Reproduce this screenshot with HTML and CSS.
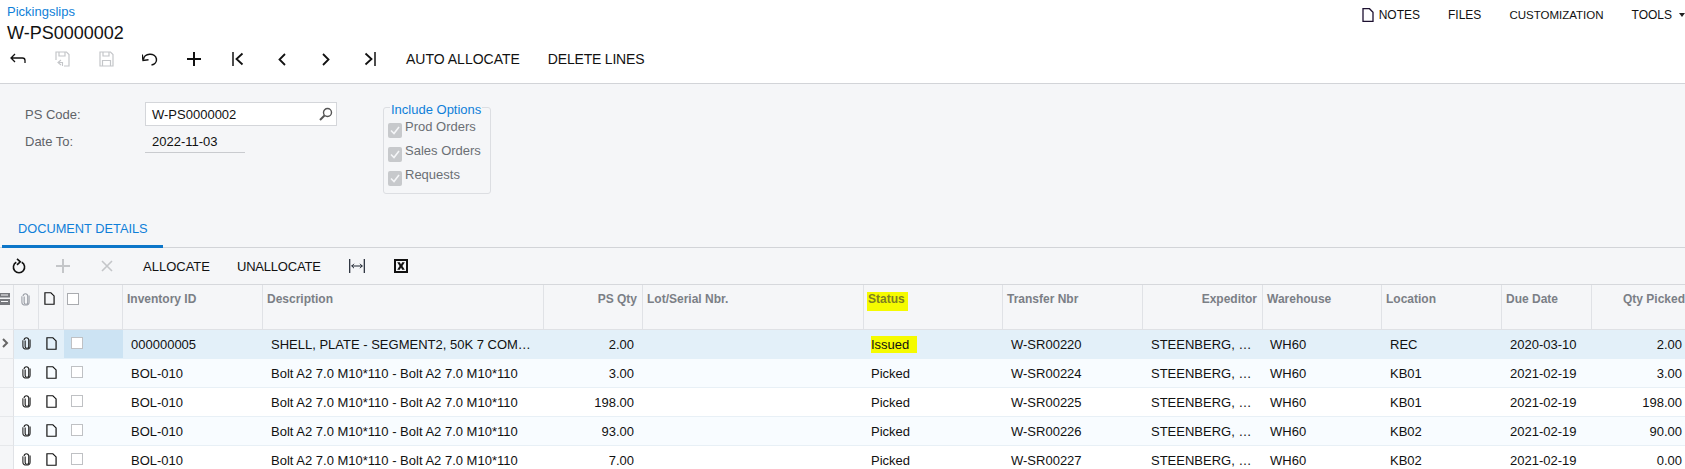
FILE: index.html
```html
<!DOCTYPE html>
<html lang="en">
<head>
<meta charset="utf-8">
<title>Pickingslips</title>
<link rel="stylesheet" href="styles.css">
</head>
<body>
<svg class="defs" width="0" height="0" aria-hidden="true">
  <symbol id="i-clip" viewBox="0 0 10 14"><path d="M3 3.500V10a2 2 0 0 0 4 0V3a2.600 2.600 0 0 0-5.200 0" transform="translate(0.500 0.800)" fill="none" stroke="currentColor" stroke-width="1.300"/><path d="M1 4v6.500a4 3.200 0 0 0 8 0V3" fill="none" stroke="currentColor" stroke-width="1.200"/></symbol>
  <symbol id="i-note" viewBox="0 0 12 14"><path d="M1 .7h6.500L11 4.200v9.100H1z" fill="none" stroke="currentColor" stroke-width="1.300"/></symbol>
  <symbol id="i-floppy" viewBox="0 0 15 16"><path d="M1 1h10.500L14 3.500V15H1zM4 1v4h6V1M3.500 15V9.500h8V15" fill="none" stroke="currentColor" stroke-width="1.200"/></symbol>
</svg>

<header class="top">
  <div class="title-row">
    <div class="title-block">
      <a class="crumb">Pickingslips</a>
      <h1 class="doc-title">W-PS0000002</h1>
    </div>
    <nav class="top-menu">
      <span class="menu-item notes">
        <svg class="ic-note-top"><use href="#i-note"/></svg>NOTES
      </span>
      <span class="menu-item">FILES</span>
      <span class="menu-item narrow">CUSTOMIZATION</span>
      <span class="menu-item tools">TOOLS<i class="caret"></i></span>
    </nav>
  </div>
  <div class="toolbar">
    <button class="tool"><svg width="16" height="12" viewBox="0 0 16 12"><path d="M5 1 1 5l4 4M1 5h11.500Q15 5 15 7.500V10" fill="none" stroke="currentColor" stroke-width="1.300"/></svg></button>
    <button class="tool off"><svg width="15" height="16" viewBox="0 0 15 16"><path d="M1 9V1h10.500L14 3.500V15H9M4 1v4h6V1" fill="none" stroke="currentColor" stroke-width="1.200"/><path d="M6 9 3 11.500 6 14M3 11.500h4.500V15" fill="none" stroke="currentColor" stroke-width="1.100"/></svg></button>
    <button class="tool off"><svg width="15" height="16"><use href="#i-floppy"/></svg></button>
    <button class="tool"><svg width="16" height="13" viewBox="0 0 16 13"><path d="M1.500 6.500A6.500 5.500 0 1 1 9.500 12" fill="none" stroke="currentColor" stroke-width="1.500"/><path d="M1 1.500v6h5.500" fill="none" stroke="currentColor" stroke-width="1.500" transform="rotate(-8 1 7)"/></svg></button>
    <button class="tool"><svg width="14" height="14" viewBox="0 0 14 14"><path d="M7 0v14M0 7h14" stroke="currentColor" stroke-width="2"/></svg></button>
    <button class="tool"><svg width="12" height="14" viewBox="0 0 12 14"><path d="M1 0v14" stroke="currentColor" stroke-width="1.500"/><path d="M10.500 1.500 4.500 7l6 5.500" fill="none" stroke="currentColor" stroke-width="1.800"/></svg></button>
    <button class="tool"><svg width="8" height="13" viewBox="0 0 8 13"><path d="M7 1 1.500 6.500 7 12" fill="none" stroke="currentColor" stroke-width="1.800"/></svg></button>
    <button class="tool"><svg width="8" height="13" viewBox="0 0 8 13"><path d="m1 1 5.500 5.500L1 12" fill="none" stroke="currentColor" stroke-width="1.800"/></svg></button>
    <button class="tool"><svg width="12" height="14" viewBox="0 0 12 14"><path d="M11 0v14" stroke="currentColor" stroke-width="1.500"/><path d="m1.500 1.500 6 5.500-6 5.500" fill="none" stroke="currentColor" stroke-width="1.800"/></svg></button>
    <span class="text-tool first">AUTO ALLOCATE</span>
    <span class="text-tool">DELETE LINES</span>
  </div>
</header>

<main class="body">
  <section class="form">
    <div class="fields">
      <div class="field-row">
        <label class="field-label">PS Code:</label>
        <div class="selector">W-PS0000002
          <svg class="search" width="14" height="14" viewBox="0 0 14 14"><circle cx="8.500" cy="5.500" r="4" fill="none" stroke="#555" stroke-width="1.400"/><path d="M5.500 8.500 1 13" stroke="#555" stroke-width="2"/></svg>
        </div>
      </div>
      <div class="field-row">
        <label class="field-label">Date To:</label>
        <div class="date">2022-11-03</div>
      </div>
    </div>
    <fieldset class="options">
      <legend class="legend">Include Options</legend>
      <div class="opt"><span class="chk"><svg width="10" height="9" viewBox="0 0 10 9"><path d="m1 4.500 3 3 5-6.500" fill="none" stroke="#f5f6f8" stroke-width="1.600"/></svg></span><span class="opt-text">Prod Orders</span></div>
      <div class="opt"><span class="chk"><svg width="10" height="9" viewBox="0 0 10 9"><path d="m1 4.500 3 3 5-6.500" fill="none" stroke="#f5f6f8" stroke-width="1.600"/></svg></span><span class="opt-text">Sales Orders</span></div>
      <div class="opt"><span class="chk"><svg width="10" height="9" viewBox="0 0 10 9"><path d="m1 4.500 3 3 5-6.500" fill="none" stroke="#f5f6f8" stroke-width="1.600"/></svg></span><span class="opt-text">Requests</span></div>
    </fieldset>
  </section>

  <div class="tabs"><span class="tab">DOCUMENT DETAILS</span></div>

  <div class="grid-toolbar">
    <button class="gtool"><svg width="14" height="16" viewBox="0 0 14 16"><path d="M4.300 4.300a5.600 5.600 0 1 0 5.400 0" fill="none" stroke="currentColor" stroke-width="1.600"/><path d="M5 .8 8.300 3.800 5 6.800" fill="none" stroke="currentColor" stroke-width="1.600"/></svg></button>
    <button class="gtool off"><svg width="14" height="14" viewBox="0 0 14 14"><path d="M7 0v14M0 7h14" stroke="currentColor" stroke-width="2"/></svg></button>
    <button class="gtool off"><svg width="12" height="12" viewBox="0 0 12 12"><path d="m1 1 10 10M11 1 1 11" stroke="currentColor" stroke-width="1.600"/></svg></button>
    <span class="gtext first">ALLOCATE</span>
    <span class="gtext second">UNALLOCATE</span>
    <svg class="fit" width="16" height="14" viewBox="0 0 16 14"><path d="M.7 0v14M15.300 0v14" stroke="currentColor" stroke-width="1.200"/><path d="M2.500 7h11M5 4.800 2.800 7 5 9.200M11 4.800 13.200 7 11 9.200" fill="none" stroke="currentColor"/></svg>
    <svg class="xls" width="14" height="14" viewBox="0 0 14 14"><rect x="1" y="1" width="12" height="12" fill="none" stroke="currentColor" stroke-width="2"/><path d="M3.200 3.300h2.600L7 5.400l1.200-2.100h2.600L8.400 7l2.400 3.700H8.200L7 8.600l-1.200 2.100H3.200L5.600 7z" fill="currentColor"/></svg>
  </div>

  <table class="grid">
    <colgroup>
      <col class="c14"><col class="c25"><col class="c25"><col class="c59"><col class="c140"><col class="c281"><col class="c99"><col class="c221"><col class="c139"><col class="c140"><col class="c120"><col class="c119"><col class="c120"><col class="c90"><col class="c99">
    </colgroup>
    <thead>
      <tr>
        <th class="gut"><svg width="11" height="12" viewBox="0 0 11 12"><path d="M0 0h11v4.500H0zM0 6h11v6H0z" fill="#77797e"/><path d="M2 2h7M2 8.500h7" stroke="#f5f6f8" stroke-width="1.200"/></svg></th>
        <th class="ic"><svg class="clip head" width="9" height="14"><use href="#i-clip"/></svg></th>
        <th class="ic"><svg class="nt head-nt" width="11" height="13"><use href="#i-note"/></svg></th>
        <th class="ic chkcol"><span class="box head-box"></span></th>
        <th>Inventory ID</th>
        <th>Description</th>
        <th class="r">PS Qty</th>
        <th>Lot/Serial Nbr.</th>
        <th><span class="mark-h">Status</span></th>
        <th>Transfer Nbr</th>
        <th class="r">Expeditor</th>
        <th>Warehouse</th>
        <th>Location</th>
        <th>Due Date</th>
        <th class="r">Qty Picked</th>
      </tr>
    </thead>
    <tbody>
      <tr class="active">
        <td class="gut"><svg width="7" height="10" viewBox="0 0 7 10"><path d="m1 1 4 4-4 4" fill="none" stroke="#666" stroke-width="2"/></svg></td>
        <td class="ic"><svg class="clip" width="9" height="14"><use href="#i-clip"/></svg></td>
        <td class="ic"><svg class="nt" width="11" height="13"><use href="#i-note"/></svg></td>
        <td class="ic chkcol sel"><span class="box"></span></td>
        <td>000000005</td><td><div class="ell">SHELL, PLATE - SEGMENT2, 50K 7 COMPONENTS</div></td><td class="r">2.00</td><td></td><td><span class="mark">Issued</span></td><td>W-SR00220</td><td><div class="ell">STEENBERG, JOHANNES</div></td><td>WH60</td><td>REC</td><td>2020-03-10</td><td class="r">2.00</td>
      </tr>
      <tr class="alt">
        <td class="gut"></td><td class="ic"><svg class="clip" width="9" height="14"><use href="#i-clip"/></svg></td><td class="ic"><svg class="nt" width="11" height="13"><use href="#i-note"/></svg></td><td class="ic chkcol"><span class="box"></span></td>
        <td>BOL-010</td><td><div class="ell">Bolt A2 7.0 M10*110 - Bolt A2 7.0 M10*110</div></td><td class="r">3.00</td><td></td><td>Picked</td><td>W-SR00224</td><td><div class="ell">STEENBERG, JOHANNES</div></td><td>WH60</td><td>KB01</td><td>2021-02-19</td><td class="r">3.00</td>
      </tr>
      <tr>
        <td class="gut"></td><td class="ic"><svg class="clip" width="9" height="14"><use href="#i-clip"/></svg></td><td class="ic"><svg class="nt" width="11" height="13"><use href="#i-note"/></svg></td><td class="ic chkcol"><span class="box"></span></td>
        <td>BOL-010</td><td><div class="ell">Bolt A2 7.0 M10*110 - Bolt A2 7.0 M10*110</div></td><td class="r">198.00</td><td></td><td>Picked</td><td>W-SR00225</td><td><div class="ell">STEENBERG, JOHANNES</div></td><td>WH60</td><td>KB01</td><td>2021-02-19</td><td class="r">198.00</td>
      </tr>
      <tr class="alt">
        <td class="gut"></td><td class="ic"><svg class="clip" width="9" height="14"><use href="#i-clip"/></svg></td><td class="ic"><svg class="nt" width="11" height="13"><use href="#i-note"/></svg></td><td class="ic chkcol"><span class="box"></span></td>
        <td>BOL-010</td><td><div class="ell">Bolt A2 7.0 M10*110 - Bolt A2 7.0 M10*110</div></td><td class="r">93.00</td><td></td><td>Picked</td><td>W-SR00226</td><td><div class="ell">STEENBERG, JOHANNES</div></td><td>WH60</td><td>KB02</td><td>2021-02-19</td><td class="r">90.00</td>
      </tr>
      <tr>
        <td class="gut"></td><td class="ic"><svg class="clip" width="9" height="14"><use href="#i-clip"/></svg></td><td class="ic"><svg class="nt" width="11" height="13"><use href="#i-note"/></svg></td><td class="ic chkcol"><span class="box"></span></td>
        <td>BOL-010</td><td><div class="ell">Bolt A2 7.0 M10*110 - Bolt A2 7.0 M10*110</div></td><td class="r">7.00</td><td></td><td>Picked</td><td>W-SR00227</td><td><div class="ell">STEENBERG, JOHANNES</div></td><td>WH60</td><td>KB02</td><td>2021-02-19</td><td class="r">0.00</td>
      </tr>
    </tbody>
  </table>
</main>
</body>
</html>
```

FILE: styles.css
```css
* { box-sizing: border-box; }
html, body { margin: 0; height: 469px; overflow: hidden; }
body { width: 1685px; background: #fff; color: #111; font: 13px "Liberation Sans", Arial, sans-serif; }
.defs { display: block; height: 0; }

.top { height: 84px; background: #fff; border-bottom: 1px solid #d2d4d8; }
.title-row { display: flex; justify-content: space-between; height: 44px; padding-left: 7px; }
.crumb { display: block; color: #0f7fd8; font-size: 13px; line-height: 15px; padding-top: 4px; height: 19px; }
.doc-title { margin: 3px 0 0; font-size: 18px; font-weight: 400; line-height: 22px; height: 22px; }
.top-menu { display: flex; align-items: center; height: 30px; font-size: 12px; gap: 28px; }
.menu-item { display: flex; align-items: center; white-space: nowrap; }
.menu-item.narrow { font-size: 11.500px; }
.ic-note-top { width: 12px; height: 14px; margin-right: 5px; color: #1d1030; }
.caret { display: inline-block; margin-left: 7px; border: 3px solid transparent; border-top: 4px solid #222; border-bottom: 0; }

.toolbar { display: flex; align-items: center; gap: 8px; height: 30px; }
.tool { display: flex; align-items: center; justify-content: center; width: 36px; height: 30px; padding: 0; border: 0; background: none; color: #111; }
.tool.off { color: #c4c6c9; }
.text-tool { font-size: 14px; margin-left: 20px; white-space: nowrap; }
.text-tool.first { margin-left: 10px; }
.text-tool + .text-tool { letter-spacing: -.2px; }

.body { background: #f5f6f8; height: 385px; }
.form { display: flex; height: 116px; padding: 18px 0 0 25px; }
.fields { width: 358px; }
.field-row { display: flex; align-items: center; height: 24px; margin-bottom: 3px; }
.field-label { width: 120px; color: #5f6368; font-size: 13px; }
.selector { position: relative; width: 192px; height: 24px; padding-left: 6px; background: #fff; border: 1px solid #d4d6da; line-height: 23px; font-size: 13px; }
.search { position: absolute; right: 3px; top: 4px; }
.date { width: 100px; height: 24px; padding-left: 7px; border-bottom: 1px solid #c9cbcf; line-height: 25px; font-size: 13px; }

.options { width: 108px; height: 97px; margin: -5px 0 0; padding: 0 0 0 4px; border: 1px solid #dcdee2; border-radius: 3px; }
.legend { height: 20px; padding: 6px 1px 0; margin-left: 2px; color: #0f7fd8; font-size: 13px; line-height: 14px; }
.opt { display: flex; height: 24px; }
.chk { display: flex; align-items: center; justify-content: center; width: 14px; height: 15px; margin-top: 6px; background: #c7c9cc; border-radius: 2px; }
.opt-text { margin: 3px 0 0 3px; line-height: 14px; color: #6b6f74; font-size: 13px; }

.tabs { height: 48px; padding: 17px 0 0 2px; border-bottom: 1px solid #d2d4d8; }
.tab { display: block; width: 161px; height: 31px; padding: 4px 0 0 16px; color: #0f7fd8; border-bottom: 3px solid #0d76c9; font-size: 12.800px; line-height: 16px; white-space: nowrap; }

.grid-toolbar { display: flex; align-items: center; height: 36px; padding-left: 1px; font-size: 13px; }
.gtool { display: flex; align-items: center; justify-content: center; width: 36px; height: 30px; margin-right: 8px; padding: 0; border: 0; background: none; color: #111; }
.gtool.off { color: #c4c6c9; }
.gtext { margin-right: 27px; white-space: nowrap; }
.gtext.first { margin-left: 10px; }
.gtext.second { margin-right: 28px; letter-spacing: -.2px; }
.fit { margin-right: 29px; color: #1d2430; }
.xls { color: #111; }

.grid { width: 1691px; table-layout: fixed; border-collapse: separate; border-spacing: 0; border-top: 1px solid #d6d8dc; }
.c14 { width: 14px; } .c25 { width: 25px; } .c59 { width: 59px; } .c140 { width: 140px; } .c281 { width: 281px; }
.c99 { width: 99px; } .c221 { width: 221px; } .c139 { width: 139px; } .c120 { width: 120px; } .c119 { width: 119px; }
.c90 { width: 90px; }

th { height: 45px; padding: 7px 5px 0 4px; background: #f5f6f8; color: #7b7f86; font-size: 12px; font-weight: 700; line-height: 15px; text-align: left; vertical-align: top; white-space: nowrap; overflow: hidden; border-right: 1px solid #e0e2e6; border-bottom: 1px solid #dfe1e5; }
th.r { text-align: right; }
td { height: 29px; padding: 0 9px 0 8px; background: #fff; font-size: 13px; line-height: 15px; white-space: nowrap; overflow: hidden; border-bottom: 1px solid #e8f0f6; }
td:nth-child(9), td:nth-child(12) { padding-left: 7px; }
td.r { text-align: right; }
.alt td { background: #f8fcff; }
.active td { background: #e3f0f9; border-bottom-color: #e3f0f9; }
.active td.sel { background: #cce3f3; }
td.gut, th.gut { padding: 0; background: #f5f6f8; border-right: 1px solid #e0e2e6; border-bottom-color: #e6e8eb; overflow: hidden; }
.active td.gut { background: #f5f6f8; }
td.gut svg { display: block; margin: 0 0 2px 2px; }
th.gut svg { display: block; margin: 8px 0 0 -1px; }
td.ic, th.ic { padding: 0; }
.clip { display: block; margin: -2px 0 0 8px; color: #222; }
.clip.head { margin: 7px 0 0 7px; color: #9a9ea6; }
.nt { display: block; margin: -2px 0 0 7px; color: #111; }
.nt.head-nt { margin: 7px 0 0 5px; }
.box { display: block; width: 12px; height: 12px; margin: -2px 0 0 7px; background: #fff; border: 1px solid #bfc1c4; }
.box.head-box { margin: 8px 0 0 3px; border-color: #a9abaf; }
.ell { overflow: hidden; text-overflow: ellipsis; }

.mark-h { display: inline-block; margin: 0 0 -4px -1px; padding: 0 3px 4px 1px; background: #f5fb00; color: #7d7f22; }
.mark { display: inline-block; width: 46px; margin: 0; padding: 1px 0; background: #f5fb00; }
```
